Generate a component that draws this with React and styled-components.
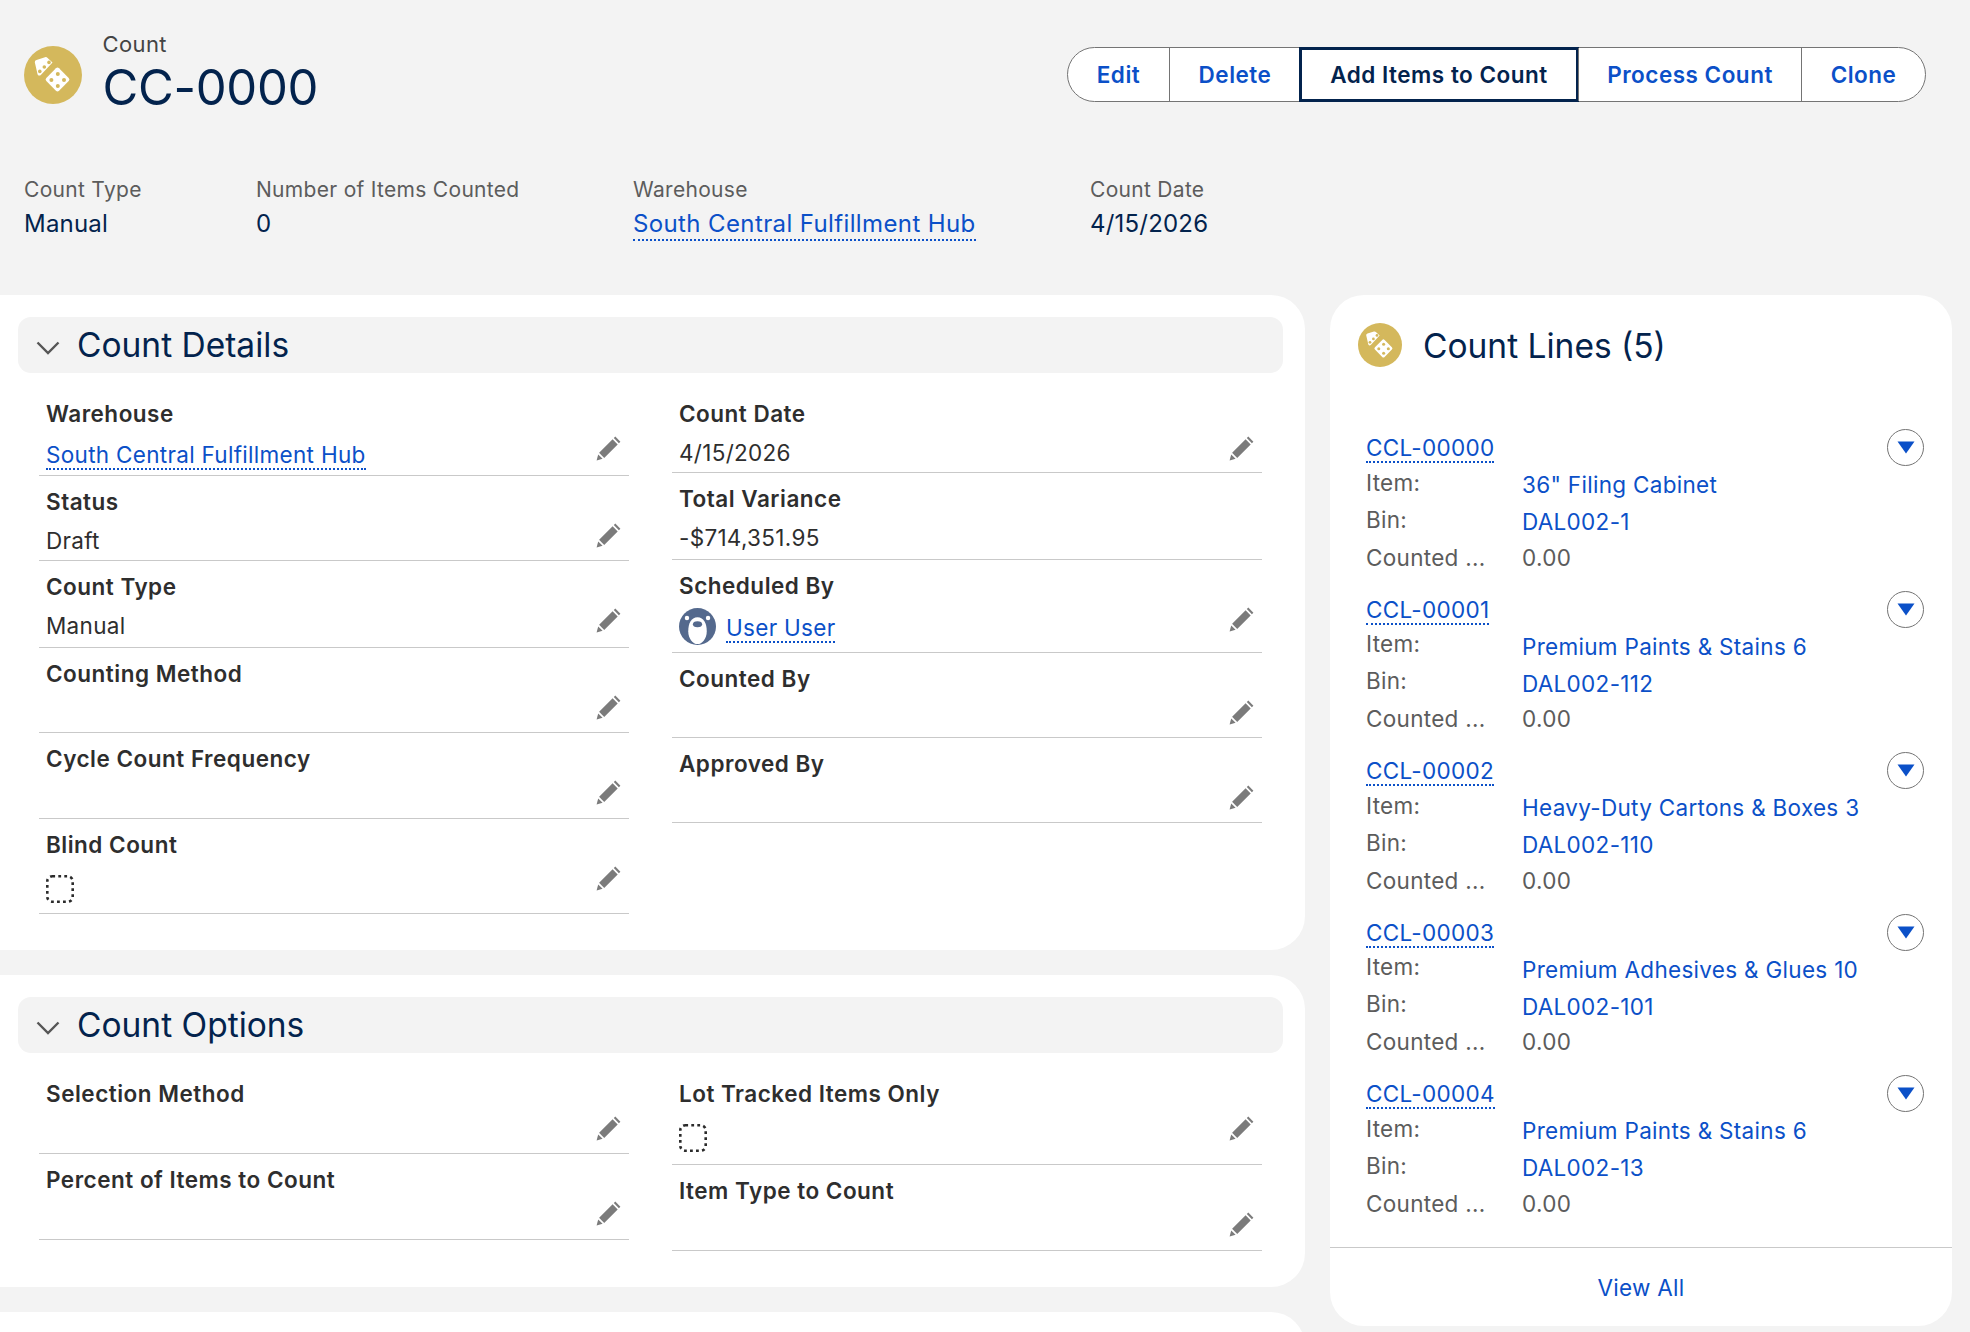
import React from "react";
import styled, { createGlobalStyle } from "styled-components";

const Global = createGlobalStyle`
  html, body { margin: 0; padding: 0; background: #f3f3f3; height: 1332px; overflow: hidden; }
  body { font-family: Inter, "Liberation Sans", sans-serif; color: #2e2e2e; }
  * { box-sizing: border-box; }
`;

const Page = styled.div`
  width: 1970px;
  height: 1332px;
  overflow: hidden;
  background: #f3f3f3;
`;

const Header = styled.header`
  height: 175px;
  padding: 32px 44px 0 24px;
  display: flex;
  justify-content: space-between;
  align-items: flex-start;
`;

const TitleBlock = styled.div`
  display: flex;
  align-items: flex-start;
  gap: 20.5px;
`;

const TitleIcon = styled.div`
  margin-top: 14px;
`;

const ObjectType = styled.div`
  font-size: 22px;
  line-height: 24px;
  letter-spacing: 0.4px;
  color: #444;
`;

const RecordName = styled.h1`
  margin: 2px 0 0;
  font-size: 49px;
  line-height: 60px;
  font-weight: 400;
  letter-spacing: -0.3px;
  color: #03234d;
`;

const ButtonGroup = styled.div`
  display: flex;
  height: 55px;
  margin-top: 15px;
  border: 1px solid #747474;
  border-radius: 28px;
  background: #fff;
`;

const ActionButton = styled.button`
  height: 100%;
  width: ${(p) => p.$w}px;
  padding: 0;
  font: 600 22.5px Inter, sans-serif;
  letter-spacing: 0.5px;
  background: transparent;
  color: ${(p) => (p.$active ? "#03234d" : "#0b50c8")};
  border: none;
  border-left: ${(p) => (p.$first ? "none" : "1px solid #747474")};
  ${(p) => p.$active && "outline: 3px solid #03234d; outline-offset: -2px; border-left: none;"}
`;

const Highlights = styled.section`
  height: 120px;
  padding-left: 24px;
  display: flex;
`;

const Highlight = styled.div`
  width: ${(p) => p.$w}px;
`;

const HighlightLabel = styled.div`
  font-size: 21px;
  line-height: 30px;
  letter-spacing: 0.3px;
  color: #5c5c5c;
  margin-bottom: 4px;
`;

const HighlightValue = styled.div`
  font-size: 24px;
  line-height: 30px;
  letter-spacing: 0.2px;
  color: #03234d;
`;

const HighlightLink = styled.a`
  display: inline-block;
  font-size: 24px;
  line-height: 30px;
  letter-spacing: 0.38px;
  color: #0b50c8;
  border-bottom: 2px dotted #0b50c8;
`;

const Columns = styled.main`
  display: flex;
  gap: 25px;
  align-items: flex-start;
`;

const LeftColumn = styled.div`
  width: 1305px;
  display: flex;
  flex-direction: column;
  gap: 25px;
`;

const Card = styled.section`
  background: #fff;
  border-radius: 0 34px 34px 0;
  padding: 22px 22px 36px 18px;
  &:empty { height: 100px; }
`;

const SectionBand = styled.div`
  height: 56px;
  background: #f3f3f3;
  border-radius: 13px;
  display: flex;
  align-items: center;
  padding-left: 18px;
  gap: 17px;
`;

const SectionTitle = styled.h2`
  margin: 0;
  font-size: 33.5px;
  font-weight: 400;
  color: #03234d;
`;

const FieldGrid = styled.div`
  display: grid;
  grid-template-columns: 590px 590px;
  column-gap: 43px;
  padding: 14px 0 0 21px;
  align-items: start;
`;

const FieldColumn = styled.div`
  display: flex;
  flex-direction: column;
`;

const PencilSlot = styled.span`
  display: block;
  width: 26px;
  height: 26px;
  margin-top: 5px;
`;

const Field = styled.div`
  padding: 11px 7px 0 7px;
  border-bottom: 1px solid #c9c9c9;
  min-height: ${(p) => p.$h || 86}px;
  &:first-child {
    padding-top: 12px;
    ${PencilSlot} { margin-top: 6px; }
  }
`;

const FieldLabel = styled.div`
  font-size: 22.5px;
  line-height: 30px;
  font-weight: 600;
  letter-spacing: 0.5px;
  color: #2e2e2e;
`;

const FieldRow = styled.div`
  display: flex;
  justify-content: space-between;
  align-items: flex-start;
`;

const FieldValue = styled.div`
  font-size: 22.5px;
  line-height: 30px;
  letter-spacing: 0.3px;
  padding-top: 9px;
  color: #2e2e2e;
`;

const FieldLink = styled.a`
  display: inline-block;
  margin-top: ${(p) => (p.$inUser ? 4 : 12)}px;
  font-size: 22.5px;
  line-height: 27px;
  letter-spacing: 0.3px;
  color: #0b50c8;
  border-bottom: 2px dotted #0b50c8;
`;

const UserValue = styled.div`
  display: flex;
  align-items: center;
  gap: 10px;
  margin-top: 7px;
`;

const BoxSlot = styled.span`
  display: block;
  width: 28px;
  height: 28px;
  margin-top: 15px;
`;

const LinesCard = styled.aside`
  width: 622px;
  height: 1031px;
  background: #fff;
  border-radius: 34px;
  display: flex;
  flex-direction: column;
`;

const LinesHeader = styled.div`
  height: 79px;
  padding: 28px 0 0 28px;
  display: flex;
  align-items: flex-start;
  gap: 21px;
`;

const LinesTitle = styled.h2`
  margin: 1px 0 0;
  font-size: 33.5px;
  line-height: 44px;
  font-weight: 400;
  color: #03234d;
`;

const LinesList = styled.div`
  flex: 1;
  padding: 60px 0 0 36px;
`;

const LineItem = styled.article`
  height: 161.6px;
  position: relative;
`;

const LineName = styled.a`
  display: inline-block;
  font-size: 22.5px;
  line-height: 27px;
  letter-spacing: 0.3px;
  color: #0b50c8;
  border-bottom: 2px dotted #0b50c8;
`;

const LineFacts = styled.div`
  display: grid;
  grid-template-columns: 156px 1fr;
  grid-auto-rows: 37px;
  margin-top: 2px;
  align-items: center;
`;

const FactLabel = styled.div`
  font-size: 22.5px;
  letter-spacing: 0.3px;
  color: #5c5c5c;
  margin-top: ${(p) => (p.$plain ? -1 : -3)}px;
`;

const FactLink = styled.a`
  font-size: 22.5px;
  letter-spacing: 0.3px;
  color: #0b50c8;
  margin-top: 2px;
`;

const FactValue = styled.div`
  font-size: 22.5px;
  letter-spacing: 0.3px;
  color: #5c5c5c;
  margin-top: -1px;
`;

const MenuButton = styled.button`
  position: absolute;
  top: -5px;
  right: 28px;
  width: 37px;
  height: 37px;
  padding: 0;
  display: grid;
  place-items: center;
  border: 1px solid #747474;
  border-radius: 50%;
  background: #fff;
`;

const LinesFooter = styled.div`
  height: 79px;
  border-top: 1px solid #c9c9c9;
  display: flex;
  align-items: center;
  justify-content: center;
  font-size: 22.5px;
  letter-spacing: 0.3px;
  color: #0b50c8;
`;

const DiceIcon = ({ size }) => (
  <svg width={size} height={size} viewBox="0 0 58 58" style={{ display: "block", flex: "none" }}>
    <circle cx="29" cy="29" r="29" fill="#d4b85c" />
    <path d="M12.5 14 L21 11.2 Q22.5 10.8 23.6 11.9 L28.5 16.6 L16.8 29 Q15 30.4 13.6 28.4 L10.8 16.2 Q10.6 14.6 12.5 14 Z" fill="#fff" />
    <circle cx="25" cy="16.4" r="1.8" fill="#d4b85c" />
    <circle cx="20.3" cy="21" r="1.8" fill="#d4b85c" />
    <circle cx="15.8" cy="25.4" r="1.8" fill="#d4b85c" />
    <rect x="24.5" y="24.5" width="18" height="18" rx="2.2" transform="rotate(45 33.5 33.5)" fill="#fff" />
    <circle cx="33.8" cy="28" r="2" fill="#d4b85c" />
    <circle cx="40" cy="34" r="2" fill="#d4b85c" />
    <circle cx="33.8" cy="40" r="2" fill="#d4b85c" />
    <circle cx="27.4" cy="34" r="2" fill="#d4b85c" />
  </svg>
);

const Chevron = () => (
  <svg width="24" height="14" viewBox="0 0 24 14" style={{ marginTop: 5 }}>
    <path d="M1.5 1.5 L12 12 L22.5 1.5" fill="none" stroke="#565656" strokeWidth="2.4" />
  </svg>
);

const Pencil = () => (
  <PencilSlot>
    <svg width="26" height="26" viewBox="0 0 26 26">
      <path d="M19.3 1.6 L24.4 6.7 L22.9 8.2 L17.8 3.1 Z" fill="#7b7b7b" />
      <path d="M16.6 4.3 L21.7 9.4 L8.2 22.9 L3.1 17.8 Z" fill="#7b7b7b" />
      <path d="M2.2 19.4 L6.6 23.8 L0.6 25.4 Z" fill="#7b7b7b" />
    </svg>
  </PencilSlot>
);

const Avatar = () => (
  <svg width="37" height="37" viewBox="0 0 40 40">
    <circle cx="20" cy="20" r="20" fill="#54698d" />
    <circle cx="8.6" cy="10.8" r="2.4" fill="#fff" />
    <circle cx="31.4" cy="10.8" r="2.4" fill="#fff" />
    <path d="M20 10 C27 10 30 17 30 25 C30 33 25 39 20 39 C15 39 10 33 10 25 C10 17 13 10 20 10 Z" fill="#fff" />
    <ellipse cx="20" cy="17.5" rx="5" ry="3.2" fill="#54698d" />
  </svg>
);

const Caret = () => (
  <svg width="18" height="13" viewBox="0 0 18 13">
    <path d="M0.5 0.5 H17.5 L9 12.5 Z" fill="#0b50c8" />
  </svg>
);

const DottedBox = () => (
  <BoxSlot>
    <svg width="28" height="28" viewBox="0 0 28 28">
      <rect x="1.3" y="1.3" width="25.4" height="25.4" rx="5" fill="none" stroke="#2b2b2b" strokeWidth="2.6" strokeDasharray="2.8 3.2" />
    </svg>
  </BoxSlot>
);

const detailsLeft = [
  { label: "Warehouse", link: "South Central Fulfillment Hub", h: 89 },
  { label: "Status", value: "Draft", h: 85 },
  { label: "Count Type", value: "Manual", h: 87 },
  { label: "Counting Method", h: 85 },
  { label: "Cycle Count Frequency", h: 86 },
  { label: "Blind Count", box: true, h: 95 },
];

const detailsRight = [
  { label: "Count Date", value: "4/15/2026", h: 86 },
  { label: "Total Variance", value: "-$714,351.95", h: 87, readOnly: true },
  { label: "Scheduled By", user: "User User", h: 93 },
  { label: "Counted By", h: 85 },
  { label: "Approved By", h: 85 },
];

const optionsLeft = [
  { label: "Selection Method", h: 87 },
  { label: "Percent of Items to Count", h: 86 },
];

const optionsRight = [
  { label: "Lot Tracked Items Only", box: true, h: 98 },
  { label: "Item Type to Count", h: 86 },
];

const lines = [
  ["CCL-00000", '36" Filing Cabinet', "DAL002-1"],
  ["CCL-00001", "Premium Paints & Stains 6", "DAL002-112"],
  ["CCL-00002", "Heavy-Duty Cartons & Boxes 3", "DAL002-110"],
  ["CCL-00003", "Premium Adhesives & Glues 10", "DAL002-101"],
  ["CCL-00004", "Premium Paints & Stains 6", "DAL002-13"],
];

const buttons = [
  ["Edit", 101],
  ["Delete", 131],
  ["Add Items to Count", 278, true],
  ["Process Count", 223],
  ["Clone", 124],
];

const FieldItem = ({ f }) => (
  <Field $h={f.h}>
    <FieldLabel>{f.label}</FieldLabel>
    <FieldRow>
      {f.link && <FieldLink>{f.link}</FieldLink>}
      {f.value && <FieldValue>{f.value}</FieldValue>}
      {f.user && (
        <UserValue>
          <Avatar />
          <FieldLink $inUser>{f.user}</FieldLink>
        </UserValue>
      )}
      {f.box && <DottedBox />}
      {!f.link && !f.value && !f.user && !f.box && <span />}
      {!f.readOnly && <Pencil />}
    </FieldRow>
  </Field>
);

const Section = ({ title, left, right }) => (
  <Card>
    <SectionBand>
      <Chevron />
      <SectionTitle>{title}</SectionTitle>
    </SectionBand>
    <FieldGrid>
      <FieldColumn>{left.map((f) => <FieldItem key={f.label} f={f} />)}</FieldColumn>
      <FieldColumn>{right.map((f) => <FieldItem key={f.label} f={f} />)}</FieldColumn>
    </FieldGrid>
  </Card>
);

export default function App() {
  return (
    <Page>
      <Global />
      <Header>
        <TitleBlock>
          <TitleIcon><DiceIcon size={58} /></TitleIcon>
          <div>
            <ObjectType>Count</ObjectType>
            <RecordName>CC-0000</RecordName>
          </div>
        </TitleBlock>
        <ButtonGroup>
          {buttons.map(([t, w, a], i) => (
            <ActionButton key={t} $w={w} $active={a} $first={i === 0}>{t}</ActionButton>
          ))}
        </ButtonGroup>
      </Header>
      <Highlights>
        <Highlight $w={232}>
          <HighlightLabel>Count Type</HighlightLabel>
          <HighlightValue>Manual</HighlightValue>
        </Highlight>
        <Highlight $w={377}>
          <HighlightLabel>Number of Items Counted</HighlightLabel>
          <HighlightValue>0</HighlightValue>
        </Highlight>
        <Highlight $w={457}>
          <HighlightLabel>Warehouse</HighlightLabel>
          <HighlightLink>South Central Fulfillment Hub</HighlightLink>
        </Highlight>
        <Highlight $w={200}>
          <HighlightLabel>Count Date</HighlightLabel>
          <HighlightValue>4/15/2026</HighlightValue>
        </Highlight>
      </Highlights>
      <Columns>
        <LeftColumn>
          <Section title="Count Details" left={detailsLeft} right={detailsRight} />
          <Section title="Count Options" left={optionsLeft} right={optionsRight} />
          <Card />
        </LeftColumn>
        <LinesCard>
          <LinesHeader>
            <DiceIcon size={44} />
            <LinesTitle>Count Lines (5)</LinesTitle>
          </LinesHeader>
          <LinesList>
            {lines.map(([name, item, bin]) => (
              <LineItem key={name}>
                <LineName>{name}</LineName>
                <MenuButton aria-label="Show actions"><Caret /></MenuButton>
                <LineFacts>
                  <FactLabel>Item:</FactLabel>
                  <FactLink>{item}</FactLink>
                  <FactLabel>Bin:</FactLabel>
                  <FactLink>{bin}</FactLink>
                  <FactLabel $plain>Counted ...</FactLabel>
                  <FactValue>0.00</FactValue>
                </LineFacts>
              </LineItem>
            ))}
          </LinesList>
          <LinesFooter>View All</LinesFooter>
        </LinesCard>
      </Columns>
    </Page>
  );
}
